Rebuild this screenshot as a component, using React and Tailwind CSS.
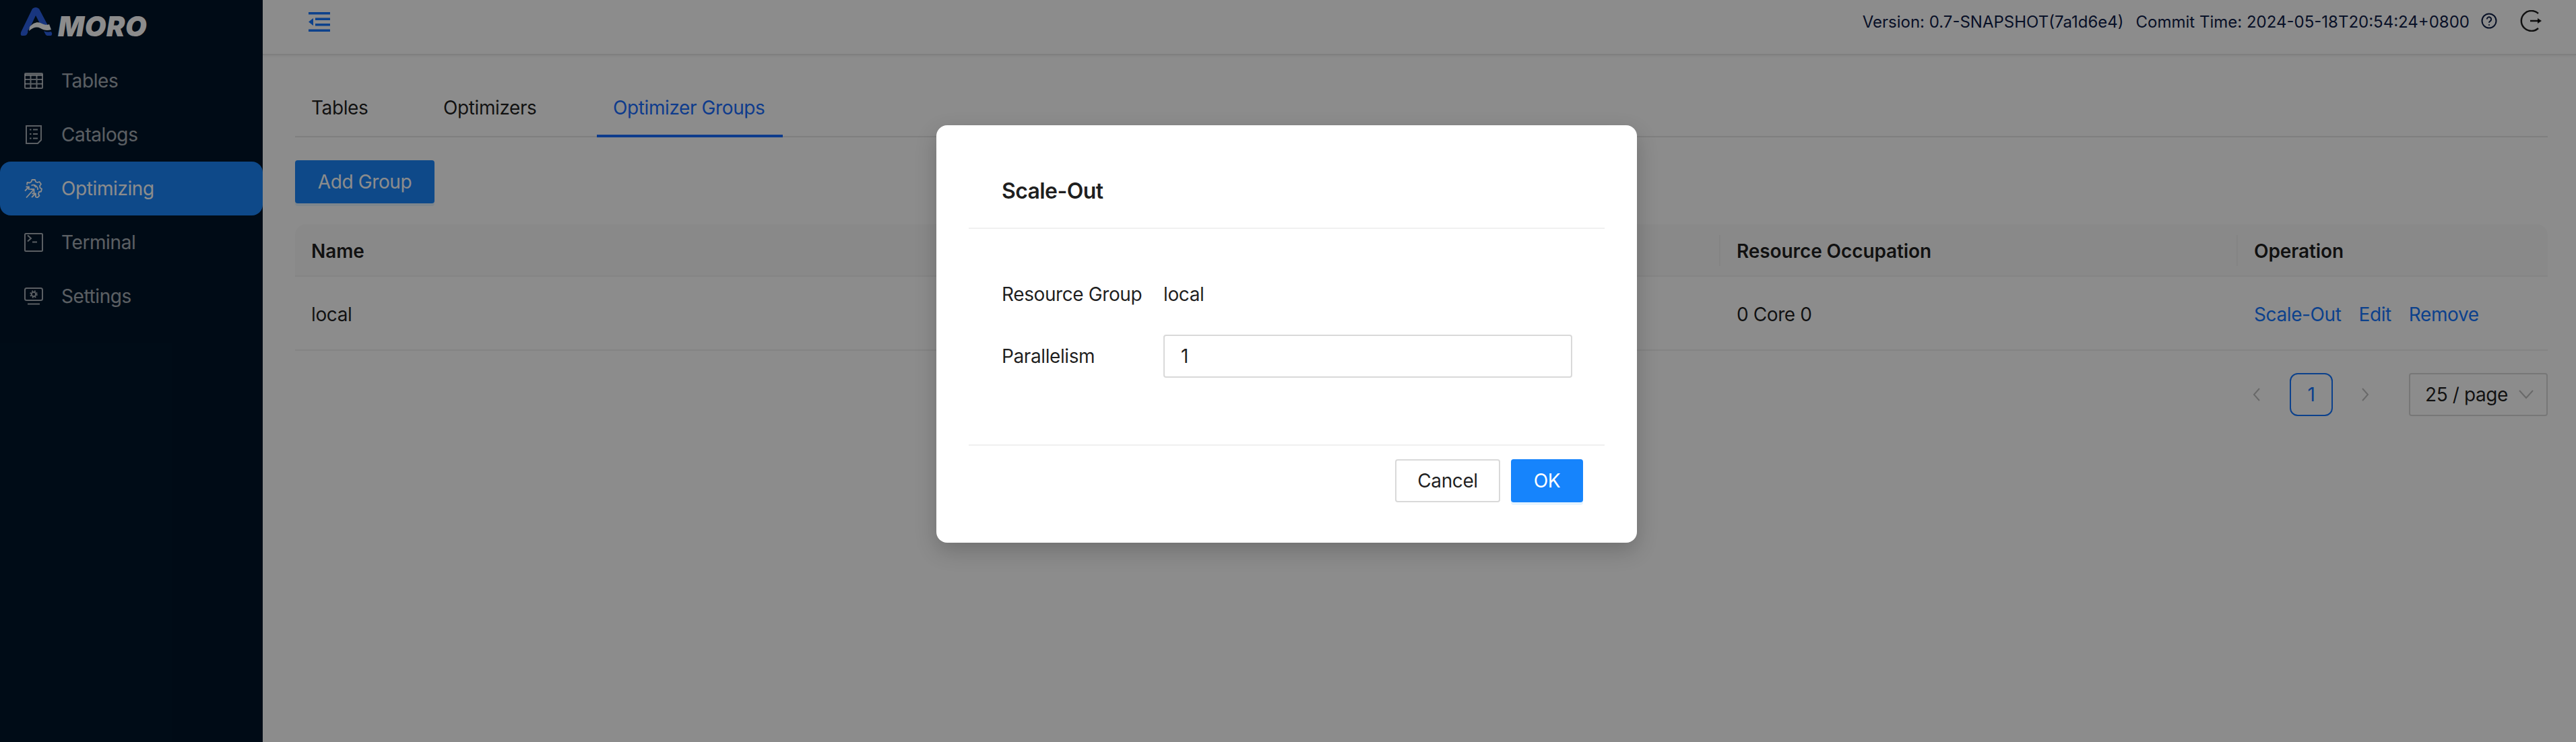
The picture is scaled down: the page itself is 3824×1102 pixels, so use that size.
const Blue = "text-[#1677ff]";

function TableIcon() {
  return (
    <svg width="28" height="24" viewBox="0 0 28 24" fill="none" stroke="currentColor" strokeWidth="2">
      <rect x="1" y="1" width="26" height="22" rx="1" />
      <path d="M1 2h26v3H1z" fill="currentColor" stroke="none" />
      <path d="M1 10h26M1 16.500h26M9.500 4v19M18.500 4v19" />
    </svg>
  );
}
function CatalogIcon() {
  return (
    <svg width="24" height="28" viewBox="0 0 24 28" fill="none" stroke="currentColor" strokeWidth="2">
      <path d="M1 1h22v21l-5 5H1z" />
      <path d="M11 6.500h7M11 13h7M11 19.500h7M6 6.500h2.500M6 13h2.500M6 19.500h2.500" />
    </svg>
  );
}
function OptimizeIcon() {
  return (
    <svg width="28" height="28" viewBox="0 0 28 28" fill="none" stroke="currentColor" strokeWidth="1.800" strokeLinejoin="round">
      <path d="M4 8.500l.5-3.500 3.500.5 2.500-1.500 1-3h4.500l1 3 2.500 1 3-1 2.500 3.500-2 2.500.5 3 2.500 1.500-1 4-3 .5-1 3 1.500 2.500-3 3-2.500-1" />
      <path d="M10.500 9.500a6.500 6.500 0 0 1 9.500 6.500" />
      <path d="M14 9.500a3 3 0 0 1 3 3" />
      <path d="M1 17.500l5.500-5.500M2.500 11.500h4.500V16" />
      <path d="M3 27.500l11-12M8.500 15h6v6" />
      <path d="M11 27l5.500-5M11.500 21.500h5.500V27" />
    </svg>
  );
}
function TerminalIcon() {
  return (
    <svg width="28" height="28" viewBox="0 0 28 28" fill="none" stroke="currentColor" strokeWidth="2">
      <rect x="1" y="1" width="26" height="26" rx="1.500" />
      <path d="M5 3.500l5 4.500-5 4.500M12 13.500h7" />
    </svg>
  );
}
function SettingsIcon() {
  return (
    <svg width="28" height="26" viewBox="0 0 28 26" fill="none" stroke="currentColor" strokeWidth="2">
      <rect x="1" y="1" width="26" height="18" rx="2.500" />
      <path d="M5 24.500h18" />
      <circle cx="14" cy="10" r="3.200" />
      <circle cx="14" cy="10" r="5" strokeWidth="1.500" strokeDasharray="2 2" />
    </svg>
  );
}

const menu = [
  ["Tables", TableIcon, ""],
  ["Catalogs", CatalogIcon, "pl-[38px]"],
  ["Optimizing", OptimizeIcon, ""],
  ["Terminal", TerminalIcon, ""],
  ["Settings", SettingsIcon, ""],
];

function Sidebar() {
  return (
    <aside className="w-[390px] shrink-0 bg-[#001529] h-[1102px]">
      <div className="h-[80px] pl-[30px] flex items-start pt-[10px]">
        <svg width="48" height="44" viewBox="0 0 48 44">
          <path d="M1 38L18 3Q23-1 28 3L47 39Q48 43 44 43H40Q38 43 37 40L23 13 10 41Q9 43 6 43H3Q0 43 1 38Z" fill="#2c62e6" />
          <path d="M11 36C18 26 26 25 31 27.500 36 30 41 30 46 28.500V37C40 38 35 37 30 34 25 31.500 19 32 12 38Z" fill="#001529" />
          <path d="M14 30C20 23 26 22 31 24.500 36 27 40 27.500 43 26L46 34C40 36 35 35 30 32 25 29.500 20 30 13 36Z" fill="#ffffff" />
        </svg>
        <span className="ml-[8px] mt-[10px] text-[41px] leading-[38px] font-black italic tracking-[0.5px] text-white [font-family:Inter,sans-serif]">MORO</span>
      </div>
      <nav className="flex flex-col">
        {menu.map(([label, Icon, extra]) => (
          <div
            key={label}
            className={
              "h-[80px] flex items-center rounded-[16px] " +
              (label === "Optimizing" ? "bg-[#1b85fa] text-white" : "text-white/65")
            }
          >
            <span className={"w-[91px] flex items-center " + (extra || "pl-[36px]")}>
              <Icon />
            </span>
            <span className="text-[28px]">{label}</span>
          </div>
        ))}
      </nav>
    </aside>
  );
}

function Header() {
  return (
    <header className="h-[82px] border-b-2 border-[#e8e8e8] flex items-start justify-between pl-[68px] pr-[51px] shadow-[0_1px_4px_rgba(0,0,0,0.08)] tracking-normal">
      <svg className={"mt-[18px] " + Blue} width="32" height="29" viewBox="0 0 32 29" fill="currentColor">
        <path d="M0 0h32v3.500H0zM10 8.500h22V12H10zM10 17h22v3.500H10zM0 25.500h32V29H0zM0 14.500L7 9v11z" />
      </svg>
      <div className="flex items-center pt-[15px] text-[24px] leading-[36px] text-[#102048]">
        <span>Version: 0.7-SNAPSHOT(7a1d6e4)</span>
        <span className="ml-[18px]">Commit Time: 2024-05-18T20:54:24+0800</span>
        <svg className="ml-[17px] -mt-[5px]" width="24" height="24" viewBox="0 0 24 24" fill="none" stroke="currentColor" strokeWidth="2">
          <circle cx="12" cy="12" r="10.500" />
          <path d="M8.800 9.500a3.200 3.200 0 1 1 4.800 2.800c-1 .6-1.600 1.200-1.600 2.500" />
          <circle cx="12" cy="18" r="1" fill="currentColor" stroke="none" />
        </svg>
        <svg className="ml-[34px] -mt-[5px] text-[#000000e0]" width="32" height="32" viewBox="0 0 32 32" fill="none" stroke="currentColor" strokeWidth="2.500">
          <path d="M27 5A15 15 0 1 0 27 27" />
          <path d="M15 16h14" />
          <path d="M26 12l6 4-6 4z" fill="currentColor" stroke="none" />
        </svg>
      </div>
    </header>
  );
}

function Tabs() {
  return (
    <div className="h-[84px] border-b-2 border-[#e8e8e8] flex items-end whitespace-nowrap text-[28px]">
      <div className="w-[196px] pl-[24px] h-[84px] flex items-center">Tables</div>
      <div className="w-[252px] pl-[24px] h-[84px] flex items-center">Optimizers</div>
      <div className="w-[276px] pl-[24px] h-[86px] -mb-[2px] flex items-center pt-[2px] text-[#1a6dff] border-b-4 border-[#1a6dff]">Optimizer Groups</div>
    </div>
  );
}

function Table() {
  const th = "h-[76px] flex items-center pt-[3px] text-[28px] font-semibold relative tracking-[-0.1px]";
  const td = "h-[108px] flex items-center pt-[3px] text-[28px]";
  return (
    <div className="mt-[31px] text-[#000000e0]">
      <div className="grid grid-cols-[2114px_768px_1fr] bg-[#fafafa] rounded-t-[16px] border-b-2 border-[#f0f0f0]">
        <div className={th + " pl-[24px]"}>Name</div>
        <div className={th + " pl-[26px]"}>
          <span className="absolute left-0 top-[16px] h-[46px] w-[2px] bg-[#f0f0f0]" />
          Resource Occupation
        </div>
        <div className={th + " pl-[26px]"}>
          <span className="absolute left-0 top-[16px] h-[46px] w-[2px] bg-[#f0f0f0]" />
          Operation
        </div>
      </div>
      <div className="grid grid-cols-[2114px_768px_1fr] border-b-2 border-[#f0f0f0]">
        <div className={td + " pl-[24px]"}>local</div>
        <div className={td + " pl-[26px]"}>0 Core 0</div>
        <div className={td + " pl-[26px] gap-[26px] text-[#1677ff]"}>
          <span>Scale-Out</span>
          <span>Edit</span>
          <span>Remove</span>
        </div>
      </div>
    </div>
  );
}

function Pagination() {
  return (
    <div className="mt-[33px] flex items-center justify-end text-[28px]">
      <svg className="text-[#bfbfbf]" width="16" height="20" viewBox="0 0 16 20" fill="none" stroke="currentColor" strokeWidth="2">
        <path d="M12 1L4 10l8 9" />
      </svg>
      <div className="ml-[41px] w-[64px] h-[64px] flex items-center justify-center rounded-[12px] border-2 border-[#1677ff] text-[#1677ff]">1</div>
      <svg className="ml-[40px] text-[#bfbfbf]" width="16" height="20" viewBox="0 0 16 20" fill="none" stroke="currentColor" strokeWidth="2">
        <path d="M4 1l8 9-8 9" />
      </svg>
      <div className="ml-[57px] w-[206px] h-[64px] flex items-center pl-[22px] rounded-[4px] border-2 border-[#d9d9d9]">
        <span>25 / page</span>
        <svg className="ml-[16px] text-[#bfbfbf]" width="22" height="14" viewBox="0 0 22 14" fill="none" stroke="currentColor" strokeWidth="2">
          <path d="M1 1l10 11L21 1" />
        </svg>
      </div>
    </div>
  );
}

function Modal() {
  return (
    <div className="absolute inset-0 bg-black/45 flex justify-center items-start pt-[186px] pr-[4px]">
      <div className="w-[1040px] h-[620px] bg-white rounded-[16px] px-[48px] shadow-[0_12px_32px_rgba(0,0,0,0.2)] text-[28px] text-[#000000e0] flex flex-col">
        <div className="h-[154px] border-b-2 border-[#f0f0f0] pl-[49px] flex items-start pt-[78px]">
          <span className="text-[32px] leading-[40px] font-semibold -tracking-[0.6px]">Scale-Out</span>
        </div>
        <div className="h-[322px] border-b-2 border-[#f0f0f0] pl-[49px] pr-[48px] pt-[65px]">
          <div className="h-[64px] flex items-center">
            <span className="w-[240px]">Resource Group</span>
            <span>local</span>
          </div>
          <div className="mt-[28px] h-[64px] flex items-center">
            <span className="w-[240px] shrink-0">Parallelism</span>
            <div className="w-[607px] h-[64px] border-2 border-[#d9d9d9] rounded-[4px] pl-[24px] flex items-center">1</div>
          </div>
        </div>
        <div className="flex justify-end gap-[16px] pt-[20px] pr-[32px]">
          <div className="w-[156px] h-[64px] rounded-[4px] border-2 border-[#d9d9d9] flex items-center justify-center">Cancel</div>
          <div className="w-[107px] h-[64px] rounded-[4px] bg-[#1684fc] text-white flex items-center justify-center shadow-[0_4px_0_rgba(5,145,255,0.1)]">OK</div>
        </div>
      </div>
    </div>
  );
}

export default function App() {
  return (
    <div className="relative w-[3824px] h-[1102px] overflow-hidden flex bg-white [font-family:Inter,'Noto_Sans',sans-serif] text-[#000000e0] tracking-[-0.4px]">
      <Sidebar />
      <main className="flex-1 min-w-0">
        <Header />
        <div className="pl-[48px] pr-[42px] pt-[38px]">
          <Tabs />
          <div className="mt-[34px] w-[207px] h-[64px] rounded-[4px] bg-[#1b85fa] text-white text-[28px] flex items-center justify-center shadow-[0_4px_0_rgba(5,145,255,0.1)]">Add Group</div>
          <Table />
          <Pagination />
        </div>
      </main>
      <Modal />
    </div>
  );
}
